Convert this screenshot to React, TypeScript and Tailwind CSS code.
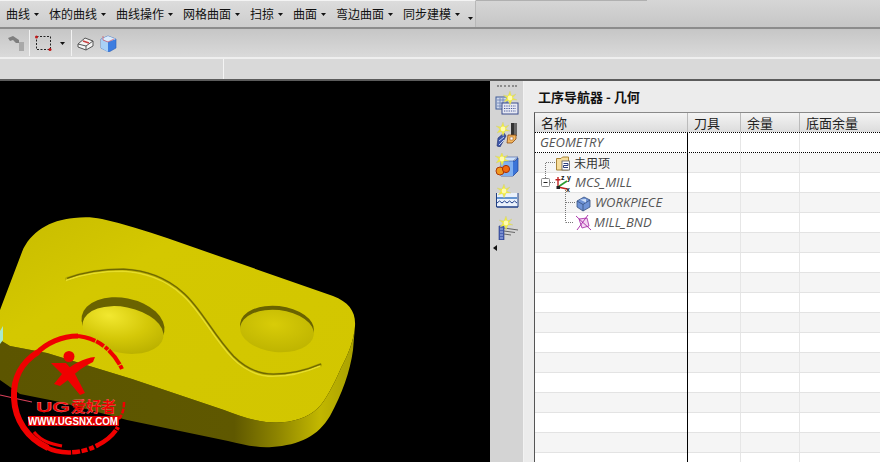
import React from "react";

const cjk = { fontFamily: '"Noto Sans CJK SC", "Liberation Sans", sans-serif' };

const menus = ["曲线", "体的曲线", "曲线操作", "网格曲面", "扫掠", "曲面", "弯边曲面", "同步建模"];

function Caret({ className = "" }: { className?: string }) {
  return (
    <svg width="5" height="3" viewBox="0 0 5 3" className={className}>
      <path d="M0 0H5L2.5 3Z" fill="#111" />
    </svg>
  );
}

function Spark({ x, y }: { x: number; y: number }) {
  return (
    <g transform={`translate(${x} ${y})`}>
      <path d="M0 -7L1.4 -2L6 -4L2.5 0L7 2L2 2L0 7L-1.5 2.5L-6 4L-3 0L-7 -3L-2 -2Z" fill="#f3ee3a" stroke="#c9c98a" strokeWidth="0.4" />
      <circle r="2.4" fill="#fffbb0" />
    </g>
  );
}

function SideIcon1() {
  return (
    <svg width="24" height="25" viewBox="0 0 24 25">
      <rect x="1" y="6" width="11" height="12" fill="#cfd8ea" stroke="#3f5a96" />
      <path d="M2 9H11M2 12H11M2 15H11M5 7V17M8 7V17" stroke="#6b80b4" strokeWidth="0.8" />
      <rect x="7" y="12" width="16" height="11" fill="#e7e9f3" stroke="#3b4c8c" />
      <path d="M9 15H21M9 17.5H21M9 20H21" stroke="#4a5b9c" strokeWidth="1.1" strokeDasharray="1.3 1" />
      <Spark x={15} y={7} />
    </svg>
  );
}
function SideIcon2() {
  return (
    <svg width="24" height="25" viewBox="0 0 24 25">
      <path d="M3 16L9 11L11 14L5 25L2 24Z" fill="#3f58a8" stroke="#1e2d6c" strokeWidth="0.6" />
      <path d="M4 19L9 15M4 23L9 18" stroke="#c8d4f4" strokeWidth="1" />
      <rect x="16" y="1" width="6" height="13" fill="#333" />
      <rect x="19" y="1" width="3" height="13" fill="#686868" />
      <path d="M13 13H21V17L17 21H12Z" fill="#f4b860" stroke="#8a4a10" strokeWidth="0.8" />
      <rect x="15" y="15" width="3" height="3" fill="#fff" stroke="#8a4a10" strokeWidth="0.5" />
      <Spark x={8} y={7} />
    </svg>
  );
}
function SideIcon3() {
  return (
    <svg width="24" height="25" viewBox="0 0 24 25">
      <path d="M6 8H20L23 5V18L18 23H6Z" fill="#3b74d8" stroke="#1c3f92" strokeWidth="0.7" />
      <path d="M6 8H18V23H6Z" fill="#7fb0f0" />
      <path d="M6 8L9 4H23L18 8Z" fill="#cfe2fa" stroke="#1c3f92" strokeWidth="0.5" />
      <circle cx="5" cy="18" r="4" fill="#ef9a20" stroke="#b03808" />
      <circle cx="11" cy="16" r="3.6" fill="#f26a10" stroke="#a83005" />
      <Spark x={7} y={6} />
    </svg>
  );
}
function SideIcon4() {
  return (
    <svg width="24" height="25" viewBox="0 0 24 25">
      <path d="M1.500 9V23H23V9" fill="#eaf1fb" stroke="#1f3d80" />
      <path d="M2 14H22" stroke="#2d6fc0" strokeWidth="1.4" />
      <path d="M2 19l2.500-2 2.500 2 2.500-2 2.500 2 2.500-2 2.500 2 2.500-2 2.500 2" fill="none" stroke="#20408c" />
      <path d="M2 23H23" stroke="#20408c" />
      <Spark x={9} y={7} />
    </svg>
  );
}
function SideIcon5() {
  return (
    <svg width="24" height="25" viewBox="0 0 24 25">
      <path d="M4 11H9V25H4Z" fill="#4a62b4" stroke="#23357f" strokeWidth="0.6" />
      <path d="M5 14H8M5 17H8M5 20H8M5 23H8" stroke="#a8b9ea" />
      <path d="M9 13L23 15M9 16L20 17.500M9 19L16 20" stroke="#666" />
      <Spark x={11} y={8} />
    </svg>
  );
}

function Logo() {
  return (
    <g>
      <path d="M0 395L18 399L32 402" stroke="#d8405a" strokeWidth="1.200" fill="none" />
      <path d="M0 331L3 326L3 340L0 344Z" fill="#a9e8cc" />
      <path d="M38 352C22 362 13 378 14 398C15 420 27 438 48 448" fill="none" stroke="#f00000" strokeWidth="6" />
      <path d="M36 354C46 343 62 336 78 336" fill="none" stroke="#f00000" strokeWidth="5" />
      <path d="M74 336C94 336 112 348 122 369" fill="none" stroke="#f00000" strokeWidth="4" strokeDasharray="22 1 9 1.500 4 1 18 1" />
      <path d="M124 402C124 410 122 416 118 420" fill="none" stroke="#f00000" strokeWidth="2.500" strokeDasharray="5 1.500" />
      <path d="M46 447C60 455 82 454 98 445C108 440 114 434 118 427" fill="none" stroke="#f00000" strokeWidth="4.500" strokeDasharray="26 1 8 1.500 6 2 5 2" />
      <path d="M34 432C42 442 52 444 62 446" fill="none" stroke="#f00000" strokeWidth="3" />
      <circle cx="69" cy="356.500" r="5.500" fill="#f00000" />
      <path d="M51 363L66 363L74 372L85 393L80 395L66 378Z" fill="#f00000" />
      <path d="M54 384L62 374C72 364 84 358 95 357L93 362C84 366 76 372 68 380L60 386Z" fill="#f00000" />
      <text x="36" y="412" fontFamily="Liberation Sans, sans-serif" fontWeight="700" fontSize="14" fill="#f00000" textLength="34" lengthAdjust="spacingAndGlyphs" stroke="#ffb8b8" strokeWidth="0.25">UG</text>
      <text x="71" y="412" fontFamily="Noto Sans CJK SC, sans-serif" fontWeight="700" fontSize="15" fill="#f00000" textLength="45" lengthAdjust="spacingAndGlyphs" stroke="#ffb0b0" strokeWidth="0.2">爱好者</text>
      <rect x="28" y="416" width="91" height="10" fill="#e00000" />
      <text x="28" y="425" fontFamily="Liberation Sans, sans-serif" fontWeight="700" fontSize="10" fill="#fff" textLength="90" lengthAdjust="spacingAndGlyphs">WWW.UGSNX.COM</text>
    </g>
  );
}

function Viewport() {
  const top =
    "M0 310L22 252C30 232 50 220 74 218C84 217 92 217 102 219C124 224 146 231 167 238L333 296C349 302 356 312 355 326C354 340 348 355 341 368C334 384 326 400 318 408C306 420 286 424 266 422C250 420 238 415 224 410L132 379L47 353L10 346L0 340Z";
  const side =
    "M0 340L10 346L47 353L132 379L224 410C238 415 250 420 266 422C286 424 306 420 318 408C326 400 334 384 341 368C348 355 354 340 355 326L353 350C350 372 342 394 330 416C318 436 300 445 272 447C258 448 244 445 228 441L127 420L60 402L20 394L0 380Z";
  const groove = "M67 279C86 272 104 270 123 270C146 271 166 279 182 293C200 308 212 335 233 357C245 369 258 375 273 375C291 375 306 371 320 365";
  return (
    <div className="relative flex-1 bg-black overflow-hidden">
      <svg className="block w-full h-full" viewBox="0 81 490 381">
        <defs>
          <linearGradient id="sideG" x1="0" y1="0" x2="1" y2="0" gradientUnits="objectBoundingBox">
            <stop offset="0" stopColor="#5c5500" />
            <stop offset="0.66" stopColor="#5f5800" />
            <stop offset="0.78" stopColor="#8d8400" />
            <stop offset="0.9" stopColor="#c2b700" />
            <stop offset="1" stopColor="#a8a000" />
          </linearGradient>
          <linearGradient id="topG" x1="0" y1="0" x2="1" y2="1">
            <stop offset="0" stopColor="#c8bc00" />
            <stop offset="0.3" stopColor="#d4c800" />
            <stop offset="1" stopColor="#d2c600" />
          </linearGradient>
          <radialGradient id="h1" cx="0.3" cy="0.25" r="0.8">
            <stop offset="0" stopColor="#f2e830" />
            <stop offset="0.6" stopColor="#d4c808" />
            <stop offset="1" stopColor="#bcb200" />
          </radialGradient>
          <radialGradient id="h2" cx="0.45" cy="0.35" r="0.7">
            <stop offset="0" stopColor="#d8cc08" />
            <stop offset="1" stopColor="#bdb300" />
          </radialGradient>
        </defs>
        <path d={side} fill="url(#sideG)" />
        <path d={top} fill="url(#topG)" />
        <ellipse cx="123" cy="324" rx="42" ry="26" transform="rotate(11 123 324)" fill="#6a6300" />
        <ellipse cx="123" cy="330" rx="41" ry="23" transform="rotate(11 123 330)" fill="url(#h1)" />
        <ellipse cx="277" cy="327" rx="37" ry="21" transform="rotate(6 277 327)" fill="#6a6300" />
        <ellipse cx="277" cy="331" rx="37" ry="21" transform="rotate(6 277 331)" fill="url(#h2)" />
        <path d={groove} fill="none" stroke="#b8ad00" strokeWidth="4" strokeLinecap="round" />
        <path d={groove} fill="none" stroke="#e8de28" strokeWidth="1.600" strokeLinecap="round" transform="translate(-0.4 1.300)" />
        <path d={groove} fill="none" stroke="#6f6800" strokeWidth="1.300" strokeLinecap="round" transform="translate(0.6 -0.800)" />
        <Logo />
      </svg>
    </div>
  );
}

function Tree() {
  return (
    <svg className="absolute left-0 top-0 pointer-events-none" width="153" height="340" viewBox="0 0 153 340">
      <path d="M152.500 0V340" stroke="#000" />
      <path d="M10.500 31V46M11 30.500H21M15 50.500H20M30.500 58V90.500M31 70.500H41M31 90.500H39" stroke="#777" strokeDasharray="1 1" fill="none" />
      {/* 未用项 folder */}
      <g transform="translate(21 24)">
        <path d="M0.500 2.500H5L6.500 1H12.500V14H0.500Z" fill="#f6dc9a" stroke="#a98438" />
        <rect x="6" y="5" width="7.500" height="9" fill="#fff" stroke="#5a5a5a" strokeWidth="0.8" />
        <path d="M7.500 7.500H12V9.500H7.500V11.500H12" fill="none" stroke="#2c3f7c" strokeWidth="1" />
      </g>
      {/* expander */}
      <rect x="6.500" y="46.500" width="8" height="8" fill="#fff" stroke="#8a8a8a" rx="1" />
      <path d="M8.500 50.500H12.500" stroke="#222" />
      {/* MCS */}
      <g transform="translate(20 42)">
        <path d="M3 3V13" stroke="#c02020" strokeWidth="1.400" />
        <path d="M3 13L12 7" stroke="#2c9a30" strokeWidth="1.600" />
        <path d="M3 13L12 15" stroke="#c02020" strokeWidth="1.600" />
        <rect x="1.500" y="12" width="3.500" height="3" fill="#222" />
        <rect x="0.500" y="5" width="5" height="1.500" fill="#c02020" />
        <text x="6" y="6" fontSize="7" fontFamily="Liberation Sans, sans-serif" fontWeight="700" fill="#111">z</text>
        <text x="12" y="6" fontSize="7" fontFamily="Liberation Sans, sans-serif" fontWeight="700" fill="#111">y</text>
        <text x="11" y="18" fontSize="7" fontFamily="Liberation Sans, sans-serif" fontWeight="700" fill="#111">x</text>
      </g>
      {/* Workpiece */}
      <g transform="translate(41 63)">
        <path d="M1 6L8 2L14 5V12L7 16L1 12Z" fill="#6f93d6" stroke="#36507f" strokeWidth="0.8" />
        <path d="M1 6L7 9.500L14 5M7 9.500V16" fill="none" stroke="#36507f" strokeWidth="0.8" />
        <path d="M4 4.500L10 7.500L10 4Z" fill="#cfe0f8" />
      </g>
      {/* Mill bnd */}
      <g transform="translate(40 83)">
        <path d="M4 4L12 3L14 11L7 13Z" fill="#f4d6f2" stroke="#a424a4" strokeWidth="0.8" />
        <path d="M1 1L16 15M13 0L2 15" stroke="#a424a4" strokeWidth="0.9" />
      </g>
    </svg>
  );
}

const cols = "grid grid-cols-[153px_53px_59px_1fr]";

function Grid() {
  const rowCount = 17;
  const labels: Record<number, { text: string; cls: string; zh?: boolean }> = {
    0: { text: "GEOMETRY", cls: "pl-[5px]" },
    1: { text: "未用项", cls: "pl-[39px]", zh: true },
    2: { text: "MCS_MILL", cls: "pl-[40px]" },
    3: { text: "WORKPIECE", cls: "pl-[60px]" },
    4: { text: "MILL_BND", cls: "pl-[59px]" },
  };
  return (
    <div className="relative ml-[10px] flex-1 min-h-0 border-l border-t border-l-[#555] border-t-[#8a8a8a] bg-white overflow-hidden">
      <div className={`${cols} h-[19px] bg-gradient-to-b from-[#f4f4f4] to-[#dcdcdc] text-[13px] text-[#222] leading-[19px]`} style={cjk}>
        <div className="pl-[6px] border-r border-[#bbb]">名称</div>
        <div className="pl-[6px] border-r border-[#bbb]">刀具</div>
        <div className="pl-[6px] border-r border-[#bbb]">余量</div>
        <div className="pl-[6px]">底面余量</div>
      </div>
      <div className="relative">
        {Array.from({ length: rowCount }).map((_, i) => {
          const l = labels[i];
          return (
            <div
              key={i}
              className={`${cols} ${i % 2 ? "bg-[#f5f5f5]" : "bg-white"} ${
                i === 0 ? "h-[21px] border-y border-dotted border-black" : "h-[20px] border-b border-[#e3e3e3]"
              }`}
            >
              <div
                className={`${l ? l.cls : ""} whitespace-nowrap ${
                  l && l.zh ? "text-[12px] not-italic text-[#333]" : "text-[13px] italic text-[#555]"
                } leading-[19px]`}
                style={l && l.zh ? cjk : { fontFamily: '"Open Sans", "Liberation Sans", sans-serif' }}
              >
                {l ? l.text : ""}
              </div>
              <div className="border-r border-[#e6e6e6]" />
              <div className="border-r border-[#e6e6e6]" />
              <div />
            </div>
          );
        })}
        <Tree />
      </div>
    </div>
  );
}

export default function App() {
  return (
    <div className="w-[880px] h-[462px] flex flex-col overflow-hidden bg-black" style={cjk}>
      {/* menu ribbon */}
      <div className="h-[29px] flex bg-gradient-to-b from-[#d6d6d6] to-[#c6c6c6] border-b-2 border-[#8c8c8c]">
        <div className="w-[476px] h-[27px] flex items-center pl-[6px] gap-[10px] border-t border-r border-t-[#f4f4f4] border-r-[#b8b8b8] bg-gradient-to-b from-[#dcdcdc] to-[#cdcdcd] text-[12px] text-[#111]">
          {menus.map((m) => (
            <div key={m} className="flex items-center gap-[4px] leading-none whitespace-nowrap">
              <span>{m}</span>
              <Caret />
            </div>
          ))}
          <Caret className="mt-[9px] ml-[-2px]" />
        </div>
        <div className="w-[171px] h-[1px] bg-[#b0b0b0]" />
      </div>
      {/* icon toolbar */}
      <div className="h-[30px] flex items-center pl-[7px] bg-gradient-to-b from-[#c6c6c6] to-[#dadada] border-b-2 border-[#efefef]">
        <svg width="17" height="16" viewBox="0 0 17 16">
          <path d="M1 3L6 1L9 3L12 5V8H9L6 5L3 6Z" fill="#7e7e7e" />
          <rect x="12" y="7" width="5" height="9" fill="#a9a9a9" />
        </svg>
        <div className="w-[1px] h-[26px] ml-[5px] bg-[#f2f2f2]" />
        <svg width="17" height="17" viewBox="0 0 17 17" className="ml-[5px]">
          <rect x="1.500" y="1.500" width="14" height="13" fill="none" stroke="#222" strokeDasharray="2 1.500" />
          <circle cx="1.500" cy="2" r="1.500" fill="#c01818" />
          <circle cx="15" cy="14.500" r="1.500" fill="#c01818" />
        </svg>
        <Caret className="ml-[8px]" />
        <div className="w-[1px] h-[26px] ml-[6px] bg-[#f2f2f2]" />
        <svg width="17" height="16" viewBox="0 0 17 16" className="ml-[5px]">
          <path d="M1 9L8 3L16 6V11L9 15L1 12Z" fill="#f4f4f4" stroke="#555" />
          <path d="M1 9L9 11V15M9 11L16 6" fill="none" stroke="#555" />
          <path d="M6 6L12 8" stroke="#c84040" strokeWidth="1.500" />
        </svg>
        <svg width="17" height="17" viewBox="0 0 17 17" className="ml-[6px]">
          <path d="M1 4L8 1L16 4V13L9 17L1 13Z" fill="#3d7de0" stroke="#2a5fb8" strokeWidth="0.6" />
          <path d="M1 4L8 7V17L1 13Z" fill="#a9d0f6" />
          <path d="M1 4L8 1L16 4L8 7Z" fill="#dcecfb" />
          <path d="M3 1V5L8 7L14 4" fill="none" stroke="#d05060" strokeWidth="0.7" />
        </svg>
      </div>
      {/* status row */}
      <div className="h-[22px] flex bg-[#d9d9d9] border-b-2 border-[#5c5c5c] shrink-0">
        <div className="w-[224px] border-r border-[#f4f4f4]" />
        <div className="flex-1" />
      </div>
      {/* work area */}
      <div className="flex-1 flex min-h-0">
        <div className="w-[490px] flex">
          <Viewport />
        </div>
        <div className="w-[34px] bg-[#d4d4d4] flex flex-col items-center border-r border-[#f2f2f2]">
          <div className="w-[20px] h-[1px] mt-[4px] border-t-2 border-dotted border-[#8c8c8c]" />
          <div className="flex flex-col items-center gap-[6px] mt-[4px]">
            <SideIcon1 />
            <SideIcon2 />
            <SideIcon3 />
            <SideIcon4 />
            <SideIcon5 />
          </div>
          <svg width="4" height="6" viewBox="0 0 4 6" className="mt-[5px] mr-[24px]">
            <path d="M4 0V6L0 3Z" fill="#111" />
          </svg>
        </div>
        <div className="flex-1 min-w-0 bg-[#ececec] flex flex-col">
          <div className="h-[31px] shrink-0 pl-[14px] pt-[6px] text-[13px] font-bold text-[#111] leading-[20px]">工序导航器 - 几何</div>
          <Grid />
        </div>
      </div>
    </div>
  );
}
